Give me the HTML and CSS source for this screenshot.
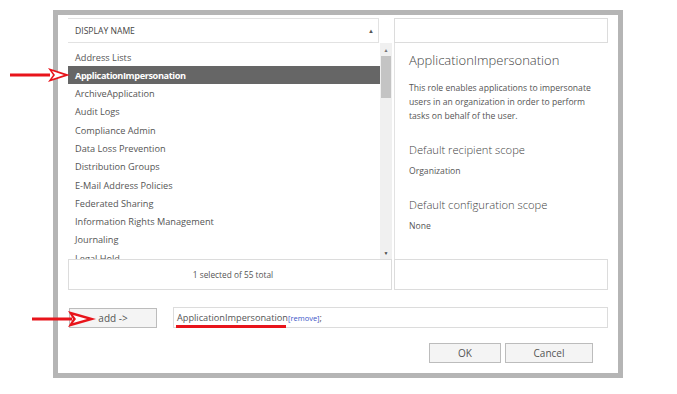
FILE: index.html
```html
<!DOCTYPE html>
<html lang="en">
<head>
    <meta charset="UTF-8">
    <title>Select Role</title>
    <link rel="stylesheet" href="styles.css">
</head>
<body>
    <div class="dialog">
        <div class="picker">
            <div class="col-head">DISPLAY NAME <span class="sort">&#9650;</span></div>
            <div class="search"></div>

            <div class="list-wrap">
                <ul class="role-list">
                    <li>Address Lists</li>
                    <li class="selected">ApplicationImpersonation</li>
                    <li>ArchiveApplication</li>
                    <li>Audit Logs</li>
                    <li>Compliance Admin</li>
                    <li>Data Loss Prevention</li>
                    <li>Distribution Groups</li>
                    <li>E-Mail Address Policies</li>
                    <li>Federated Sharing</li>
                    <li>Information Rights Management</li>
                    <li>Journaling</li>
                    <li>Legal Hold</li>
                </ul>
                <div class="scrollbar">
                    <span class="scroll-up">&#9650;</span>
                    <div class="thumb"></div>
                    <span class="scroll-down">&#9660;</span>
                </div>
            </div>
            <div class="details">
                <h2>ApplicationImpersonation</h2>
                <p>This role enables applications to impersonate users in an organization in order to perform tasks on behalf of the user.</p>
                <h3>Default recipient scope</h3>
                <p class="value">Organization</p>
                <h3>Default configuration scope</h3>
                <p class="value">None</p>
            </div>

            <div class="status">1 selected of 55 total</div>
            <div class="status-side"></div>
        </div>

        <div class="add-row">
            <button class="add-btn">add -&gt;</button>
            <div class="chosen">
                <span class="chosen-name">ApplicationImpersonation</span><a class="remove">[remove]</a>;
            </div>
        </div>

        <div class="actions">
            <button class="btn">OK</button>
            <button class="btn cancel">Cancel</button>
        </div>
    </div>

    <!-- red annotation arrows drawn over the screenshot -->
    <svg class="arrow arrow-list" width="64" height="18" viewBox="0 0 64 18">
        <line x1="0" y1="9" x2="40" y2="9" stroke="#e8141b" stroke-width="3"/>
        <polygon points="38,2 60,9 38,16 43,9" fill="#e8141b"/>
        <polygon points="42,5 54,9 42,13 45,9" fill="#fff"/>
    </svg>
    <svg class="arrow arrow-add" width="68" height="18" viewBox="0 0 68 18">
        <line x1="0" y1="9" x2="40" y2="9" stroke="#e8141b" stroke-width="3"/>
        <polygon points="36,1 64,9 36,17 41,9" fill="#e8141b"/>
        <polygon points="41,5 55,9 41,13 44,9" fill="#fff"/>
    </svg>
    <div class="underline"></div>
</body>
</html>
```

FILE: styles.css
```css
body {
    margin: 0;
    background-color: #fff;
    font-family: "Open Sans", "Noto Sans", sans-serif;
    color: #555;
}

.dialog {
    box-sizing: border-box;
    width: 570px;
    height: 368px;
    margin: 10px 0 0 53px;
    border: 5px solid #b5b5b5;
    padding: 3px 10px 0 10px;
    background-color: #fff;
}

.picker {
    display: grid;
    grid-template-columns: 326px 214px;
    grid-template-rows: 25px 216px 31px;
}

.col-head {
    box-sizing: border-box;
    width: 311px;
    border-top: 1px solid #e2e2e2;
    border-right: 1px solid #e2e2e2;
    border-bottom: 1px solid #e2e2e2;
    padding-left: 7px;
    font-size: 8.6px;
    line-height: 24px;
    color: #444;
    position: relative;
}

.sort {
    position: absolute;
    right: 4px;
    top: 0;
    font-size: 6px;
    color: #555;
}

.search {
    border: 1px solid #dcdcdc;
}

.list-wrap {
    display: flex;
    overflow: hidden;
}

.role-list {
    list-style-type: none;
    margin: 0;
    padding: 4.5px 0 0 0;
    width: 312px;
    font-size: 9.2px;
}

.role-list li {
    height: 18.3px;
    line-height: 19px;
    padding-left: 7px;
    white-space: nowrap;
}

.role-list li.selected {
    background-color: #666;
    color: #fff;
    font-weight: bold;
    letter-spacing: -0.4px;
}

.scrollbar {
    width: 12px;
    background-color: #f0f0f0;
    display: flex;
    flex-direction: column;
    align-items: center;
    font-size: 5px;
    color: #777;
}

.scroll-up {
    margin-top: 3px;
    line-height: 8px;
}

.thumb {
    width: 10px;
    height: 42px;
    background-color: #c4c4c4;
    margin-top: 2px;
}

.scroll-down {
    margin-top: auto;
    margin-bottom: 2px;
    color: #444;
    line-height: 8px;
}

.details {
    border-left: 1px solid #e2e2e2;
    padding: 8px 0 0 14px;
}

.details h2 {
    margin: 0 0 12px 0;
    font-size: 13px;
    font-weight: 300;
    color: #444;
    line-height: 18px;
}

.details p {
    margin: 0;
    font-size: 8.6px;
    line-height: 14px;
    color: #555;
    width: 190px;
}

.details h3 {
    margin: 19px 0 6px 0;
    font-size: 11.2px;
    font-weight: 300;
    color: #444;
    line-height: 16px;
}

.details h3 + p.value {
    margin-bottom: 2px;
}

.details p.value {
    font-size: 8.6px;
}

.status {
    box-sizing: border-box;
    width: 324px;
    border: 1px solid #dcdcdc;
    padding-left: 6px;
    text-align: center;
    font-size: 8.3px;
    line-height: 29px;
}

.status-side {
    border: 1px solid #dcdcdc;
}

.add-row {
    display: flex;
    align-items: center;
    margin-top: 17px;
}

.add-btn {
    box-sizing: border-box;
    width: 88px;
    height: 20px;
    margin-left: 1px;
    background-color: #f4f4f4;
    border: 1px solid #bcbcbc;
    font-family: inherit;
    font-size: 10px;
    color: #555;
    padding: 0;
}

.chosen {
    box-sizing: border-box;
    width: 435px;
    height: 21px;
    margin-left: 16px;
    border: 1px solid #dcdcdc;
    padding-left: 3px;
    font-size: 9.2px;
    line-height: 19px;
    color: #555;
}

.remove {
    color: #3a55c8;
    font-size: 7.5px;
}

.actions {
    display: flex;
    justify-content: flex-end;
    gap: 4px;
    margin-top: 15px;
    padding-right: 15px;
}

.btn {
    box-sizing: border-box;
    width: 72px;
    height: 20px;
    background-color: #f4f4f4;
    border: 1px solid #bcbcbc;
    font-family: inherit;
    font-size: 10px;
    color: #555;
    padding: 0;
}

.btn.cancel {
    width: 88px;
}

.arrow {
    position: absolute;
}

.arrow-list {
    left: 10px;
    top: 66px;
}

.arrow-add {
    left: 32px;
    top: 310px;
}

.underline {
    position: absolute;
    left: 176px;
    top: 325px;
    width: 110px;
    height: 3px;
    background-color: #e8141b;
}
```
